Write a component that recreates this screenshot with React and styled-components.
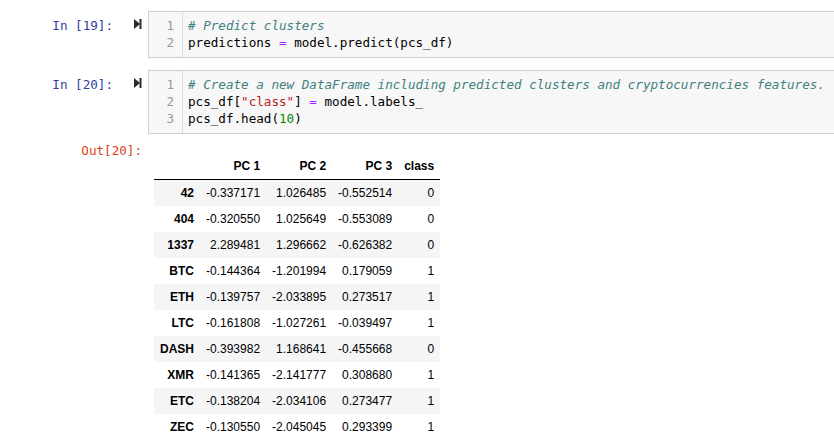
import React from 'react';
import styled, { createGlobalStyle } from 'styled-components';

const GlobalStyle = createGlobalStyle`
body {
  margin: 0;
  background: #fff;
  overflow: hidden;
}
`

const Notebook = styled.div`
width: 834px;
height: 439px;
padding-top: 11px;
box-sizing: border-box;
overflow: hidden;
font-family: "DejaVu Sans Mono", "Liberation Mono", monospace;
font-size: 12.6px;
`

const Cell = styled.div`
display: flex;
align-items: flex-start;
margin-bottom: 12px;
`

const InPrompt = styled.div`
width: 113px;
flex-shrink: 0;
text-align: right;
color: #303f9f;
line-height: 17px;
padding-top: 6px;
white-space: pre;
`

const RunButton = styled.div`
width: 35px;
flex-shrink: 0;
padding-top: 8px;
padding-left: 21px;
box-sizing: border-box;
svg { display: block; }
`

const InputArea = styled.div`
flex: 1;
display: flex;
background: #f7f7f7;
border: 1px solid #cfcfcf;
border-right: none;
min-width: 0;
`

const Gutter = styled.div`
width: 25px;
padding: 5px 8px 6px 0;
border-right: 1px solid #ddd;
color: #999;
text-align: right;
line-height: 17px;
flex-shrink: 0;
`

const Code = styled.div`
padding: 5px 0 6px 5px;
line-height: 17px;
white-space: pre;
color: #000;
`

const Comment = styled.span`
color: #408080;
font-style: italic;
`

const Op = styled.span`
color: #aa22ff;
`

const Str = styled.span`
color: #ba2121;
`

const Num = styled.span`
color: #008800;
`

const OutputRow = styled.div`
display: flex;
align-items: flex-start;
margin-top: -4px;
`

const OutPrompt = styled.div`
width: 142px;
flex-shrink: 0;
text-align: right;
color: #d84315;
line-height: 17px;
white-space: pre;
`

const Frame = styled.table`
margin: 11px 0 0 12px;
border-collapse: collapse;
border-spacing: 0;
font-family: "Liberation Sans", Arial, sans-serif;
font-size: 12px;
color: #000;

th, td {
  padding: 6px;
  line-height: 14px;
  text-align: right;
  white-space: nowrap;
}

thead th {
  font-weight: bold;
  border-bottom: 1px solid #000;
}

tbody th {
  font-weight: bold;
}

tbody tr:nth-child(odd) {
  background: #f5f5f5;
}
`

const rows = [
  ['42', '-0.337171', '1.026485', '-0.552514', 0],
  ['404', '-0.320550', '1.025649', '-0.553089', 0],
  ['1337', '2.289481', '1.296662', '-0.626382', 0],
  ['BTC', '-0.144364', '-1.201994', '0.179059', 1],
  ['ETH', '-0.139757', '-2.033895', '0.273517', 1],
  ['LTC', '-0.161808', '-1.027261', '-0.039497', 1],
  ['DASH', '-0.393982', '1.168641', '-0.455668', 0],
  ['XMR', '-0.141365', '-2.141777', '0.308680', 1],
  ['ETC', '-0.138204', '-2.034106', '0.273477', 1],
  ['ZEC', '-0.130550', '-2.045045', '0.293399', 1],
];

const StepIcon = () => (
  <svg width="8" height="10" viewBox="0 0 8 10">
    <path d="M0 0 L6 5 L0 10 Z" fill="#2b2b2b" />
    <rect x="5.5" y="0" width="2" height="10" fill="#2b2b2b" />
  </svg>
);

const CodeCell = ({ count, lines }) => (
  <Cell>
    <InPrompt>In [{count}]:</InPrompt>
    <RunButton><StepIcon /></RunButton>
    <InputArea>
      <Gutter>
        {lines.map((_, i) => <div key={i}>{i + 1}</div>)}
      </Gutter>
      <Code>
        {lines.map((l, i) => <div key={i}>{l}</div>)}
      </Code>
    </InputArea>
  </Cell>
);

const App = () => {
  return (
    <Notebook>
      <GlobalStyle />
      <CodeCell
        count={19}
        lines={[
          <Comment># Predict clusters</Comment>,
          <>predictions <Op>=</Op> model.predict(pcs_df)</>,
        ]}
      />
      <CodeCell
        count={20}
        lines={[
          <Comment># Create a new DataFrame including predicted clusters and cryptocurrencies features.</Comment>,
          <>pcs_df[<Str>"class"</Str>] <Op>=</Op> model.labels_</>,
          <>pcs_df.head(<Num>10</Num>)</>,
        ]}
      />
      <OutputRow>
        <OutPrompt>Out[20]:</OutPrompt>
        <Frame>
          <thead>
            <tr>
              <th></th>
              <th>PC 1</th>
              <th>PC 2</th>
              <th>PC 3</th>
              <th>class</th>
            </tr>
          </thead>
          <tbody>
            {rows.map(r => (
              <tr key={r[0]}>
                <th>{r[0]}</th>
                <td>{r[1]}</td>
                <td>{r[2]}</td>
                <td>{r[3]}</td>
                <td>{r[4]}</td>
              </tr>
            ))}
          </tbody>
        </Frame>
      </OutputRow>
    </Notebook>
  );
};

export default App;
